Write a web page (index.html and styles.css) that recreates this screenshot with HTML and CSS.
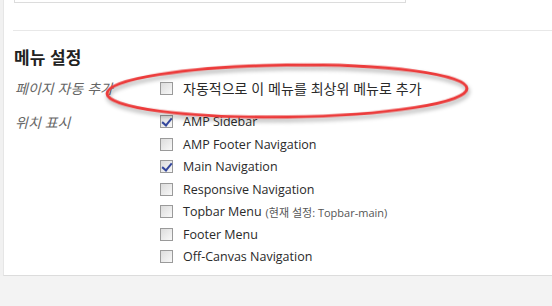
FILE: index.html
```html
<!DOCTYPE html>
<html lang="ko">
<head>
    <meta charset="UTF-8">
    <title>메뉴 설정</title>
    <link rel="stylesheet" href="styles.css">
</head>
<body>
    <div class="panel">
        <div class="top-box"></div>
        <div class="divider"></div>

        <h3>메뉴 설정</h3>
        <div class="settings">
            <div class="label">페이지 자동 추가</div>
            <div class="row"><span class="box"></span><span class="ko">자동적으로 이 메뉴를 최상위 메뉴로 추가</span></div>

            <div class="label loc">위치 표시</div>
            <div class="list">
                <div class="row"><span class="box checked"></span>AMP Sidebar</div>
                <div class="row"><span class="box"></span>AMP Footer Navigation</div>
                <div class="row"><span class="box checked"></span>Main Navigation</div>
                <div class="row"><span class="box"></span>Responsive Navigation</div>
                <div class="row"><span class="box"></span>Topbar Menu <small>(현재 설정: Topbar-main)</small></div>
                <div class="row"><span class="box"></span>Footer Menu</div>
                <div class="row"><span class="box"></span>Off-Canvas Navigation</div>
            </div>
        </div>

        <!-- highlight drawn over the auto-add option -->
        <svg class="circle" width="380" height="70" viewBox="0 0 380 70">
            <ellipse cx="182" cy="32" rx="180" ry="26" transform="rotate(-0.8 182 32)"/>
        </svg>
    </div>
    <div class="footer"></div>
</body>
</html>
```

FILE: styles.css
```css
body {
    margin: 0;
    background-color: #f1f1f1;
    font-family: "Open Sans", "Noto Sans CJK KR", sans-serif;
    font-size: 12.5px;
    color: #2a2a2a;
}
.panel {
    position: relative;
    margin-left: 3px;
    height: 275px;
    background: white;
    border-left: 1px solid #e6e6e6;
    border-bottom: 1px solid #dcdcdc;
}
.top-box {
    margin-left: 10px;
    width: 390px;
    height: 2px;
    border: 1px solid #dcdcdc;
    border-top: none;
}
.divider {
    margin: 27px 0 0 9px;
    border-top: 1px solid #e8e8e8;
}
h3 {
    margin: 16px 0 0 10px;
    font-family: "Noto Sans CJK KR", sans-serif;
    font-size: 17px;
    font-weight: bold;
    color: #222;
    line-height: 20px;
}
.settings {
    display: grid;
    grid-template-columns: 145px 1fr;
    margin: 10px 0 0 11px;
}
.label {
    font-family: "Noto Sans CJK KR", sans-serif;
    font-size: 14px;
    font-style: italic;
    color: #666;
    line-height: 22px;
}
.label.loc {
    margin-top: 11px;
}
.list {
    margin-top: 11px;
}
.row {
    display: flex;
    align-items: center;
    height: 22.5px;
}
.ko {
    font-family: "Noto Sans CJK KR", sans-serif;
    font-size: 14px;
}
.row small {
    font-size: 11px;
    color: #555;
    margin-left: 4px;
}
.box {
    width: 11px;
    height: 11px;
    margin-right: 10px;
    border: 1px solid #9a9a9a;
    background: linear-gradient(135deg, #dcdcdc, #f8f8f8);
    flex-shrink: 0;
    position: relative;
}
.box.checked::after {
    content: "";
    position: absolute;
    left: 3px;
    top: 0;
    width: 4px;
    height: 8px;
    border: solid #34479c;
    border-width: 0 2px 2px 0;
    transform: rotate(40deg);
}
.circle {
    position: absolute;
    left: 101px;
    top: 59px;
    overflow: visible;
}
.circle ellipse {
    fill: none;
    stroke: #ec3b3b;
    stroke-width: 3;
    filter: drop-shadow(1px 3px 2px rgba(0, 0, 0, 0.35));
}
.footer {
    height: 30px;
    background-color: #f3f3f3;
}
```
